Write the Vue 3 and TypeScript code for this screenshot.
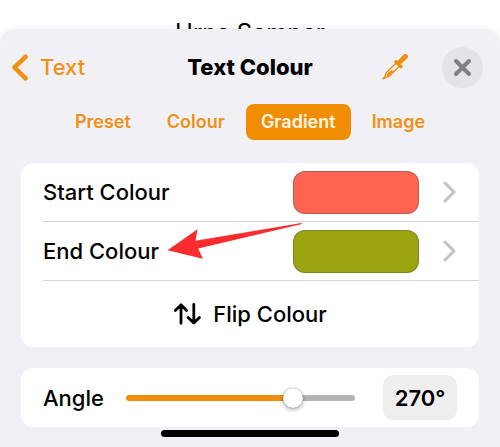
<script setup lang="ts">
import { computed, ref } from 'vue'

type Tab = 'Preset' | 'Colour' | 'Gradient' | 'Image'

interface ColourRow {
  label: string
  swatch: string
}

const tabs: Tab[] = ['Preset', 'Colour', 'Gradient', 'Image']
const activeTab = ref<Tab>('Gradient')

const rows = ref<ColourRow[]>([
  { label: 'Start Colour', swatch: '#ff6352' },
  { label: 'End Colour', swatch: '#99a40f' },
])

const angle = ref(270)

// The native thumb is 20px wide, so its centre travels 20px less than the track.
const fill = computed(() => {
  const ratio = angle.value / 360
  return `calc(10px + (100% - 20px) * ${ratio})`
})

const angleText = computed({
  get: () => `${angle.value}°`,
  set: (value: string) => {
    const parsed = parseInt(value, 10)
    if (!Number.isNaN(parsed)) angle.value = Math.min(360, Math.max(0, parsed))
  },
})

function flip() {
  rows.value = [
    { label: 'Start Colour', swatch: rows.value[1].swatch },
    { label: 'End Colour', swatch: rows.value[0].swatch },
  ]
}
</script>

<template>
  <div class="screen">
    <div class="document"><p class="document-text">Urna Semper</p></div>

    <main class="sheet">
      <header class="header">
        <button class="back" type="button">
          <svg width="18" height="28" viewBox="0 0 18 28" aria-hidden="true">
            <path d="M15.5 2.8 4.5 13.4l11 11" fill="none" stroke="currentColor" stroke-width="4.6" stroke-linecap="round" stroke-linejoin="round" />
          </svg>
          <span>Text</span>
        </button>
        <h1 class="title">Text Colour</h1>
        <div class="actions">
          <button class="icon-button" type="button" aria-label="Pick colour">
            <svg width="28" height="28" viewBox="0 0 28 28" aria-hidden="true">
              <path d="M23.4 2.4 18.6 7.2" stroke="currentColor" stroke-width="5" stroke-linecap="round" />
              <path d="m14 7.8 4.8 4.8" stroke="currentColor" stroke-width="3.6" stroke-linecap="round" />
              <path d="M13.4 9.8 4.2 18.8 3.2 21.8 1 25 4.6 23.2 7.4 22.2 16.6 13" fill="none" stroke="currentColor" stroke-width="1.3" stroke-linejoin="round" stroke-linecap="round" />
              <path d="M5.4 19.4 8.8 16.6h3.2L7 21.4 4 22.4Z" fill="currentColor" />
            </svg>
          </button>
          <button class="close" type="button" aria-label="Close">
            <svg width="19" height="19" viewBox="0 0 19 19" aria-hidden="true">
              <path d="m3 3 13 13M16 3 3 16" stroke="currentColor" stroke-width="4" stroke-linecap="round" />
            </svg>
          </button>
        </div>
      </header>

      <nav class="tabs">
        <button
          v-for="tab in tabs"
          :key="tab"
          type="button"
          class="tab"
          :class="{ active: tab === activeTab }"
          :aria-pressed="tab === activeTab"
          @click="activeTab = tab"
        >
          {{ tab }}
        </button>
      </nav>

      <section class="card">
        <button v-for="row in rows" :key="row.label" type="button" class="row">
          <span class="row-label">{{ row.label }}</span>
          <span class="swatch" :style="{ backgroundColor: row.swatch }"></span>
          <svg class="chevron" width="14" height="22" viewBox="0 0 14 22" aria-hidden="true">
            <path d="m2 2 9 9-9 9" fill="none" stroke="currentColor" stroke-width="3" stroke-linecap="round" stroke-linejoin="round" />
          </svg>
        </button>
        <button type="button" class="flip" @click="flip">
          <svg width="28" height="22" viewBox="0 0 28 22" aria-hidden="true">
            <path d="M8 20.3V1.8M2.4 7.4 8 1.8l5.6 5.6M20.8 1.4v18.7M15.2 14.5l5.6 5.6 5.6-5.6" fill="none" stroke="currentColor" stroke-width="2.8" stroke-linecap="round" stroke-linejoin="round" />
          </svg>
          <span>Flip Colour</span>
        </button>
        <svg class="pointer" width="136" height="37" viewBox="0 0 136 37" aria-hidden="true">
          <path d="M.5 27.3 30.5 6.3 28.5 17.7 134.5.1 135 1.1 31.2 25.6 35.9 35.7Z" fill="#fb2c2f" />
        </svg>
      </section>

      <section class="card angle">
        <label for="angle-range">Angle</label>
        <input
          id="angle-range"
          v-model.number="angle"
          class="range"
          type="range"
          min="0"
          max="360"
          :style="{ '--fill': fill }"
        />
        <input v-model.lazy="angleText" class="angle-value" type="text" aria-label="Angle in degrees" />
      </section>

      <div class="home-indicator"></div>
    </main>
  </div>
</template>

<style>
body {
  background: #f1f0f5;
}
</style>

<style scoped>
.screen {
  font-family: Inter, "Liberation Sans", sans-serif;
  font-size: 22px;
  font-weight: 500;
  line-height: 28px;
  color: #000;
  background: #fff;
}

button,
input {
  margin: 0;
  padding: 0;
  border: 0;
  background: none;
  color: inherit;
  font: inherit;
}

button {
  cursor: pointer;
}

svg {
  display: block;
  flex: none;
}

.document {
  height: 29px;
  overflow: hidden;
  padding-top: 19px;
  box-sizing: border-box;
  text-align: center;
}

.document-text {
  margin: 0;
  font-size: 24px;
  font-weight: 400;
}

.sheet {
  padding: 18px 21px 10px;
  border-radius: 16px 16px 0 0;
  background: #f1f0f5;
  box-shadow: 0 0 8px rgba(0, 0, 0, 0.08);
}

.header {
  display: grid;
  grid-template-columns: 1fr auto 1fr;
  align-items: center;
  margin: 0 -4px;
}

.back {
  display: flex;
  align-items: center;
  justify-self: start;
  gap: 12px;
  margin-left: -7px;
  color: #ee9114;
}

.title {
  margin: 0;
  font-size: 22px;
  line-height: 28px;
  font-weight: 800;
}

.back span,
.title {
  padding-bottom: 2px;
}

.actions {
  display: flex;
  align-items: center;
  justify-content: flex-end;
  gap: 32px;
}

.icon-button {
  color: #ee8e0c;
}

.close {
  display: grid;
  place-items: center;
  width: 41px;
  height: 41px;
  border-radius: 50%;
  background: #e4e3e8;
  color: #7f7f84;
}

.tabs {
  display: flex;
  justify-content: center;
  gap: 6px;
  margin-top: 16px;
}

.tab {
  height: 36px;
  padding: 0 15px;
  border-radius: 8px;
  color: #ee9114;
  font-size: 18px;
  font-weight: 600;
}

.tab.active {
  background: #f18d02;
  color: #fff8ea;
}

.card {
  position: relative;
  margin-top: 23px;
  border-radius: 12px;
  background: #fff;
}

.row {
  display: flex;
  align-items: center;
  width: calc(100% - 22px);
  height: 59px;
  margin-left: 22px;
  padding-right: 22px;
  border-bottom: 1px solid #d4d4d4;
  text-align: left;
}

.row-label {
  flex: 1;
}

.swatch {
  box-sizing: border-box;
  width: 126px;
  height: 43px;
  margin-right: 24px;
  border: 1px solid rgba(90, 90, 80, 0.45);
  border-radius: 12px;
}

.chevron {
  color: #c2c2c4;
}

.flip {
  display: flex;
  align-items: center;
  justify-content: center;
  gap: 12px;
  width: 100%;
  height: 66px;
}

.pointer {
  position: absolute;
  top: 60px;
  left: 146px;
  pointer-events: none;
}

.angle {
  display: flex;
  align-items: center;
  height: 59px;
  margin-top: 21px;
  padding: 0 22px;
}

.range {
  flex: 1;
  min-width: 0;
  height: 28px;
  margin: 0 28px 0 22px;
  appearance: none;
}

.range::-webkit-slider-runnable-track {
  height: 6px;
  border-radius: 3px;
  background: linear-gradient(to right, #ee8e0c var(--fill), #b4b4b4 var(--fill));
}

.range::-webkit-slider-thumb {
  width: 20px;
  height: 20px;
  margin-top: -7px;
  border-radius: 50%;
  background: #fff;
  box-shadow: 0 0 1px rgba(0, 0, 0, 0.6), 0 2px 4px rgba(0, 0, 0, 0.3);
  appearance: none;
}

.angle-value {
  width: 74px;
  height: 45px;
  border-radius: 10px;
  background: #eeeeef;
  font-weight: 600;
  text-align: center;
}

.home-indicator {
  width: 178px;
  height: 7px;
  margin: 3px auto 0;
  border-radius: 4px;
  background: #000;
}
</style>
